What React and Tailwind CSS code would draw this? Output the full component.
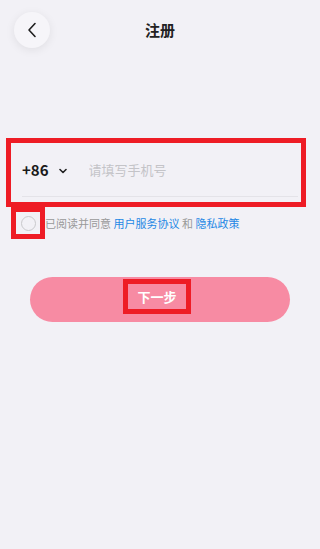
import React, { useState } from "react";

const ChevronLeft = () => (
  <svg width="10" height="16" viewBox="0 0 10 16" fill="none">
    <path d="M8 1.5 L2 8 L8 14.5" stroke="#1f1f1f" strokeWidth="1.6" strokeLinecap="round" strokeLinejoin="round" />
  </svg>
);

const ChevronDown = () => (
  <svg width="8" height="6" viewBox="0 0 8 6" fill="none">
    <path d="M1 1.5 L4 4.5 L7 1.5" stroke="#222" strokeWidth="1.6" strokeLinecap="round" strokeLinejoin="round" />
  </svg>
);

const App = () => {
  const [phone, setPhone] = useState("");
  const [agreed, setAgreed] = useState(false);

  return (
    <div
      className="w-[320px] h-[549px] bg-[#f2f1f6] overflow-hidden"
      style={{ fontFamily: '"Noto Sans CJK SC", "Noto Sans", sans-serif' }}
    >
      <div className="h-[60px] grid grid-cols-[64px_1fr_64px] items-center">
        <button className="ml-[14px] w-[36px] h-[36px] rounded-full bg-[#f6f5f9] shadow-[0_2px_10px_rgba(0,0,0,0.08)] flex items-center justify-center">
          <ChevronLeft />
        </button>
        <h1 className="text-center text-[15px] font-bold text-[#222]">注册</h1>
        <div />
      </div>

      <div className="mt-[78px] ml-[6px] w-[300px] h-[69px] border-[5px] border-[#ee1c25] flex flex-col">
        <div className="flex items-center h-[53px] pl-[11px] pt-[1px]">
          <span className="text-[15px] font-bold text-[#1a1a1a]">+86</span>
          <span className="ml-[10px] mt-[1px]">
            <ChevronDown />
          </span>
          <input
            value={phone}
            onChange={(e) => setPhone(e.target.value)}
            placeholder="请填写手机号"
            className="ml-[22px] flex-1 bg-transparent outline-none text-[13px] text-[#333] placeholder:text-[#c4c4c8]"
          />
        </div>
        <div className="ml-[11px] mr-[3px] h-px bg-[#e4e3e8]" />
      </div>

      <div className="flex items-center">
        <button
          onClick={() => setAgreed(!agreed)}
          className="ml-[11px] w-[34px] h-[32px] border-[5px] border-[#ee1c25] flex items-center justify-center"
        >
          <span className={`w-[15px] h-[15px] rounded-full border ${agreed ? "border-[#f78aa2] bg-[#f78aa2]" : "border-[#c9c9cc]"}`} />
        </button>
        <p className="text-[11px] text-[#999]">
          已阅读并同意 <span className="text-[#1e88e5]">用户服务协议</span> 和 <span className="text-[#1e88e5]">隐私政策</span>
        </p>
      </div>

      <div className="mt-[38px] mx-[30px] h-[45px] rounded-full bg-[#f78ba3] flex items-center justify-center">
        <div className="-ml-[6px] -mt-[6px] w-[68px] h-[35px] border-[5px] border-[#ee1c25] flex items-center justify-center">
          <span className="text-[13px] font-bold text-white">下一步</span>
        </div>
      </div>
    </div>
  );
};

export default App;
